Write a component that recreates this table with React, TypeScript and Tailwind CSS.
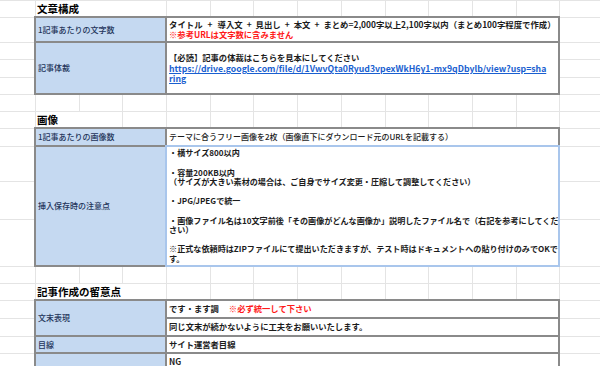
import React from 'react';

type Cell = {
  c: number;
  r: number;
  cs: number;
  rs: number;
  kind: 'title' | 'label' | 'content' | 'selected';
  body?: React.ReactNode;
};

const font = { fontFamily: '"Noto Sans CJK JP", "Noto Sans", sans-serif' };

const Red = ({ children }: { children: React.ReactNode }) => (
  <span className="text-[#ff1a1a]">{children}</span>
);

// the " + " separators are wider in the sheet than a plain space
const Plus = ({ wide }: { wide?: boolean }) => (
  <span className={wide ? 'mx-[5px]' : 'mx-[4px]'}>+</span>
);

const cells: Cell[] = [
  // 文章構成
  { c: 2, r: 2, cs: 2, rs: 1, kind: 'title', body: '文章構成' },
  { c: 2, r: 3, cs: 3, rs: 1, kind: 'label', body: '1記事あたりの文字数' },
  {
    c: 5, r: 3, cs: 9, rs: 1, kind: 'content',
    body: (
      <div>
        <div className="text-[8.4px]">
          タイトル<Plus wide />導入文<Plus />見出し<Plus />本文<Plus />まとめ=2,000字以上2,100字以内（まとめ100字程度で作成）
        </div>
        <Red>※参考URLは文字数に含みません</Red>
      </div>
    ),
  },
  { c: 2, r: 4, cs: 3, rs: 3, kind: 'label', body: '記事体裁' },
  {
    c: 5, r: 4, cs: 9, rs: 3, kind: 'content',
    body: (
      <div>
        <div className="mb-[2px]">【必読】記事の体裁はこちらを見本にしてください</div>
        <span className="text-[#1a5fd0] underline text-[8.7px]">
          https://drive.google.com/file/d/1VwvQta0Ryud3vpexWkH6y1-mx9qDbylb/view?usp=sha
          <br />
          ring
        </span>
      </div>
    ),
  },
  // 画像
  { c: 2, r: 8, cs: 1, rs: 1, kind: 'title', body: '画像' },
  { c: 2, r: 9, cs: 3, rs: 1, kind: 'label', body: '1記事あたりの画像数' },
  {
    c: 5, r: 9, cs: 9, rs: 1, kind: 'content',
    body: <span className="font-medium text-[8px]">テーマに合うフリー画像を2枚（画像直下にダウンロード元のURLを記載する）</span>,
  },
  { c: 2, r: 10, cs: 3, rs: 3, kind: 'label', body: '挿入保存時の注意点' },
  {
    c: 5, r: 10, cs: 9, rs: 3, kind: 'selected',
    body: (
      <div>
        <div>・横サイズ800以内</div>
        <div>&nbsp;</div>
        <div>・容量200KB以内</div>
        <div>（サイズが大きい素材の場合は、ご自身でサイズ変更・圧縮して調整してください）</div>
        <div>&nbsp;</div>
        <div>・JPG/JPEGで統一</div>
        <div>&nbsp;</div>
        <div>・画像ファイル名は10文字前後「その画像がどんな画像か」説明したファイル名で（右記を参考にしてくだ</div>
        <div>さい）</div>
        <div>&nbsp;</div>
        <div>※正式な依頼時はZIPファイルにて提出いただきますが、テスト時はドキュメントへの貼り付けのみでOKで</div>
        <div>す。</div>
      </div>
    ),
  },
  // 記事作成の留意点
  { c: 2, r: 14, cs: 2, rs: 1, kind: 'title', body: '記事作成の留意点' },
  { c: 2, r: 15, cs: 3, rs: 2, kind: 'label', body: '文末表現' },
  {
    c: 5, r: 15, cs: 9, rs: 1, kind: 'content',
    body: (
      <span>
        です・ます調<span className="ml-[10px]" />
        <Red>※必ず統一して下さい</Red>
      </span>
    ),
  },
  { c: 5, r: 16, cs: 9, rs: 1, kind: 'content', body: '同じ文末が続かないように工夫をお願いいたします。' },
  { c: 2, r: 17, cs: 3, rs: 1, kind: 'label', body: '目線' },
  { c: 5, r: 17, cs: 9, rs: 1, kind: 'content', body: 'サイト運営者目線' },
  { c: 2, r: 18, cs: 3, rs: 1, kind: 'label', body: '' },
  { c: 5, r: 18, cs: 9, rs: 1, kind: 'content', body: <span className="self-start pt-[3px]">NG</span> },
];

const COLS = 14;
const ROWS = 18;

const kindClass: Record<Cell['kind'], string> = {
  title: 'relative z-[1] bg-white border-b border-[#e2e2e2] text-[10.5px] font-bold text-black pl-[1px] items-center whitespace-nowrap',
  label: 'relative z-[2] -ml-[2px] -mt-[2px] border-2 border-[#8a8a8a] bg-[#c5d9f1] text-[8px] font-medium text-[#23345a] pl-[2px] items-center whitespace-nowrap overflow-hidden',
  content: 'relative z-[2] -ml-[2px] -mt-[2px] border-2 border-[#8a8a8a] bg-white text-[8.3px] leading-[9.6px] font-bold text-[#1c1c1c] pl-[2px] items-center whitespace-nowrap overflow-hidden',
  selected: 'relative z-[3] -ml-[2px] -mt-[2px] border-2 border-[#a9c6ec] bg-white text-[8.1px] leading-[9.6px] font-bold text-[#1c1c1c] pl-[2px] items-center whitespace-nowrap overflow-hidden',
};

export default function App() {
  const covered = cells.reduce((n, x) => n + x.cs * x.rs, 0);
  const blanks = COLS * ROWS - covered;

  return (
    <div className="w-[600px] h-[366px] overflow-hidden bg-white" style={font}>
      <div className="grid grid-cols-[36px_repeat(13,43.69px)] grid-rows-[1px_17px_25px_17px_18px_17px_17px_17px_18px_35px_38px_47px_17px_17px_18px_18px_17px_30px]">
        {Array.from({ length: blanks }, (_, i) => (
          <div key={'b' + i} className="border-r border-b border-[#e4e4e4]" />
        ))}
        {cells.map((x, i) => (
          <div
            key={i}
            className={`flex ${kindClass[x.kind]}`}
            style={{ gridColumn: `${x.c} / span ${x.cs}`, gridRow: `${x.r} / span ${x.rs}` }}
          >
            {x.body}
          </div>
        ))}
      </div>
    </div>
  );
}
